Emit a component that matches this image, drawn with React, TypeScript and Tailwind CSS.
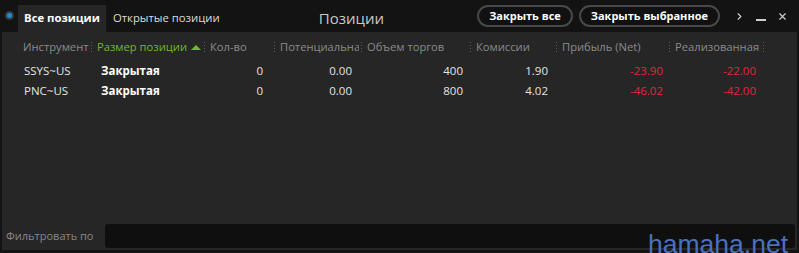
import { ChevronRight, X } from "lucide-react";

type Row = {
  symbol: string;
  size: string;
  qty: string;
  potential: string;
  volume: string;
  fees: string;
  net: string;
  realized: string;
};

const rows: Row[] = [
  { symbol: "SSYS~US", size: "Закрытая", qty: "0", potential: "0.00", volume: "400", fees: "1.90", net: "-23.90", realized: "-22.00" },
  { symbol: "PNC~US", size: "Закрытая", qty: "0", potential: "0.00", volume: "800", fees: "4.02", net: "-46.02", realized: "-42.00" },
];

const cols = "grid grid-cols-[74px_113px_70px_87px_109px_86px_113px_94px]";

function Sep() {
  return (
    <span className="flex h-[11px] w-px shrink-0 flex-col justify-between">
      <span className="h-px w-px bg-[#5a5a5a]" />
      <span className="h-px w-px bg-[#5a5a5a]" />
      <span className="h-px w-px bg-[#5a5a5a]" />
      <span className="h-px w-px bg-[#5a5a5a]" />
    </span>
  );
}

function HeadCell({ label, active }: { label: string; active?: boolean }) {
  return (
    <div className="flex min-w-0 items-center justify-between gap-[2px] pl-[5px]">
      <span className={`flex min-w-0 items-center gap-[4px] overflow-hidden whitespace-nowrap ${active ? "text-[#6dbb2c]" : "text-[#8a8a8a]"}`}>
        {label}
        {active && <span className="h-0 w-0 shrink-0 border-x-[5px] border-b-[5px] border-x-transparent border-b-[#6dbb2c]" />}
      </span>
      <Sep />
    </div>
  );
}

export default function App() {
  return (
    <div className="relative h-[253px] w-[799px] overflow-hidden bg-[#131313] font-['Open_Sans',sans-serif] text-[11.5px]">
      {/* Top bar */}
      <div className="flex h-[32px] items-end">
        <div className="flex h-full w-[18px] items-center justify-center">
          <span className="mt-[-1px] flex h-[9px] w-[9px] items-center justify-center rounded-full bg-[#3a3a3a]">
            <span className="h-[5px] w-[5px] rounded-full bg-[#1e8fe0]" />
          </span>
        </div>
        <div className="flex h-[27px] w-[88px] items-center justify-center bg-[#262626] text-[11.3px] font-bold text-white">
          Все позиции
        </div>
        <div className="flex h-[27px] items-center pl-[7px] text-[11.3px] text-[#dcdcdc]">Открытые позиции</div>
        <div className="flex h-[27px] flex-1 items-center justify-center pl-[6px] text-[15px] text-[#c8c8c8]">Позиции</div>
        <div className="flex h-full items-center gap-[6px] pb-[1px]">
          <button className="h-[22px] rounded-full border-2 border-[#484848] bg-[#111] px-[10px] text-[11px] font-bold leading-none text-white">
            Закрыть все
          </button>
          <button className="h-[22px] rounded-full border-2 border-[#484848] bg-[#111] px-[10px] text-[11px] font-bold leading-none text-white">
            Закрыть выбранное
          </button>
        </div>
        <div className="flex h-full items-center gap-[11px] pl-[14px] pr-[11px] text-[#cfcfcf]">
          <ChevronRight size={11} strokeWidth={2.5} />
          <span className="mt-[8px] h-[2px] w-[10px] bg-[#cfcfcf]" />
          <X size={11} strokeWidth={2.5} />
        </div>
      </div>

      {/* Panel */}
      <div className="mx-[2px] flex h-[218px] flex-col bg-[#262626]">
        <div className={`${cols} ml-[16px] mt-[8px] h-[14px] text-[11.2px] leading-[14px]`}>
          <HeadCell label="Инструмент" />
          <HeadCell label="Размер позиции" active />
          <HeadCell label="Кол-во" />
          <HeadCell label="Потенциальна" />
          <HeadCell label="Объем торгов" />
          <HeadCell label="Комиссии" />
          <HeadCell label="Прибыль (Net)" />
          <HeadCell label="Реализованная" />
        </div>

        <div className="ml-[16px] mt-[7px] flex flex-col">
          {rows.map((r) => (
            <div key={r.symbol} className={`${cols} h-[20px] items-center text-[11.5px] text-[#e4e4e4]`}>
              <div className="pl-[6px]">{r.symbol}</div>
              <div className="pl-[9px] font-bold text-white">{r.size}</div>
              <div className="pr-[12px] text-right">{r.qty}</div>
              <div className="pr-[10px] text-right">{r.potential}</div>
              <div className="pr-[8px] text-right">{r.volume}</div>
              <div className="pr-[9px] text-right">{r.fees}</div>
              <div className="pr-[7px] text-right text-[#e0263a]">{r.net}</div>
              <div className="pr-[8px] text-right text-[#e0263a]">{r.realized}</div>
            </div>
          ))}
        </div>

        <div className="mt-auto mb-[2px] flex h-[24px] items-center">
          <span className="w-[103px] pl-[4px] text-[11px] text-[#868686]">Фильтровать по</span>
          <div className="h-full flex-1 rounded-[3px] bg-[#0f0f0f]" />
          <div className="w-[2px]" />
        </div>
      </div>

      <span className="absolute bottom-[-4px] right-[11px] font-['Liberation_Sans',sans-serif] text-[26.5px] leading-none text-[#4a70c0]">
        hamaha.net
      </span>
    </div>
  );
}
